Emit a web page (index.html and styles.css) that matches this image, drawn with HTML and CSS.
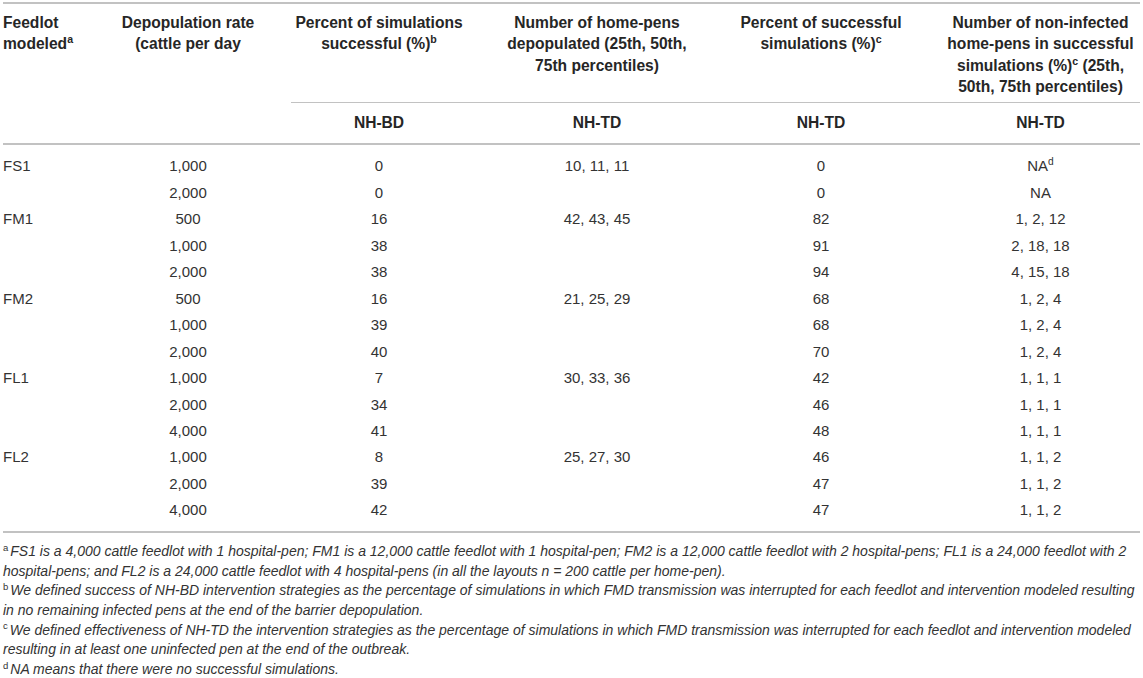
FILE: index.html
```html
<!DOCTYPE html>
<html lang="en">
<head>
<meta charset="utf-8">
<title>Table</title>
<link rel="stylesheet" href="styles.css">
</head>
<body>
<div class="page">
<table class="tbl">
<colgroup>
<col class="c1"><col class="c2"><col class="c3"><col class="c4"><col class="c5"><col class="c6">
</colgroup>
<thead>
<tr class="h1">
<th rowspan="2" class="left">Feedlot<br>modeled<sup>a</sup></th>
<th rowspan="2">Depopulation rate<br>(cattle per day</th>
<th>Percent of simulations<br>successful (%)<sup>b</sup></th>
<th>Number of home-pens<br>depopulated (25th, 50th,<br>75th percentiles)</th>
<th>Percent of successful<br>simulations (%)<sup>c</sup></th>
<th class="last">Number of non-infected<br>home-pens in successful<br>simulations (%)<sup>c</sup> (25th,<br>50th, 75th percentiles)</th>
</tr>
<tr class="h2">
<th>NH-BD</th>
<th>NH-TD</th>
<th>NH-TD</th>
<th class="last">NH-TD</th>
</tr>
</thead>
<tbody>
<tr><td class="left">FS1</td><td>1,000</td><td>0</td><td>10, 11, 11</td><td>0</td><td class="last">NA<sup>d</sup></td></tr>
<tr><td class="left"></td><td>2,000</td><td>0</td><td></td><td>0</td><td class="last">NA</td></tr>
<tr><td class="left">FM1</td><td>500</td><td>16</td><td>42, 43, 45</td><td>82</td><td class="last">1, 2, 12</td></tr>
<tr><td class="left"></td><td>1,000</td><td>38</td><td></td><td>91</td><td class="last">2, 18, 18</td></tr>
<tr><td class="left"></td><td>2,000</td><td>38</td><td></td><td>94</td><td class="last">4, 15, 18</td></tr>
<tr><td class="left">FM2</td><td>500</td><td>16</td><td>21, 25, 29</td><td>68</td><td class="last">1, 2, 4</td></tr>
<tr><td class="left"></td><td>1,000</td><td>39</td><td></td><td>68</td><td class="last">1, 2, 4</td></tr>
<tr><td class="left"></td><td>2,000</td><td>40</td><td></td><td>70</td><td class="last">1, 2, 4</td></tr>
<tr><td class="left">FL1</td><td>1,000</td><td>7</td><td>30, 33, 36</td><td>42</td><td class="last">1, 1, 1</td></tr>
<tr><td class="left"></td><td>2,000</td><td>34</td><td></td><td>46</td><td class="last">1, 1, 1</td></tr>
<tr><td class="left"></td><td>4,000</td><td>41</td><td></td><td>48</td><td class="last">1, 1, 1</td></tr>
<tr><td class="left">FL2</td><td>1,000</td><td>8</td><td>25, 27, 30</td><td>46</td><td class="last">1, 1, 2</td></tr>
<tr><td class="left"></td><td>2,000</td><td>39</td><td></td><td>47</td><td class="last">1, 1, 2</td></tr>
<tr><td class="left"></td><td>4,000</td><td>42</td><td></td><td>47</td><td class="last">1, 1, 2</td></tr>
</tbody>
</table>
<div class="notes">
<p><sup>a</sup>FS1 is a 4,000 cattle feedlot with 1 hospital-pen; FM1 is a 12,000 cattle feedlot with 1 hospital-pen; FM2 is a 12,000 cattle feedlot with 2 hospital-pens; FL1 is a 24,000 feedlot with 2<br>hospital-pens; and FL2 is a 24,000 cattle feedlot with 4 hospital-pens (in all the layouts n = 200 cattle per home-pen).</p>
<p><sup>b</sup>We defined success of NH-BD intervention strategies as the percentage of simulations in which FMD transmission was interrupted for each feedlot and intervention modeled resulting<br>in no remaining infected pens at the end of the barrier depopulation.</p>
<p><sup>c</sup>We defined effectiveness of NH-TD the intervention strategies as the percentage of simulations in which FMD transmission was interrupted for each feedlot and intervention modeled<br>resulting in at least one uninfected pen at the end of the outbreak.</p>
<p><sup>d</sup>NA means that there were no successful simulations.</p>
</div>
</div>
</body>
</html>
```

FILE: styles.css
```css
html, body {
  margin: 0;
  padding: 0;
  background: #ffffff;
}

.page {
  padding: 2px 3px 0 3px;
  font-family: "Liberation Sans", Arial, Helvetica, sans-serif;
  color: #333333;
}

.tbl {
  width: 1137px;
  table-layout: fixed;
  border-collapse: separate;
  border-spacing: 0;
  font-size: 15px;
}

.c1 { width: 82px; }
.c2 { width: 206px; }
.c3 { width: 176px; }
.c4 { width: 260px; }
.c5 { width: 188px; }
.c6 { width: 225px; }

.tbl th,
.tbl td {
  padding: 0;
  text-align: center;
  white-space: nowrap;
}

.tbl .left {
  text-align: left;
}

.tbl .last {
  padding-left: 26px;
}

.tbl th {
  font-size: 15.6px;
  font-weight: bold;
  color: #262626;
  line-height: 21.3px;
  vertical-align: top;
}

.h1 th {
  border-top: 2px solid #c2c2c2;
  padding-top: 8px;
  padding-bottom: 5px;
}

.h1 th[rowspan] {
  border-bottom: 2px solid #c2c2c2;
}

.h2 th {
  border-top: 1px solid #c2c2c2;
  border-bottom: 2px solid #c2c2c2;
  padding-top: 9px;
  padding-bottom: 10px;
}

.tbl td {
  line-height: 26.46px;
}

.tbl tbody tr:first-child td {
  padding-top: 8px;
}

.tbl tbody tr:last-child td {
  padding-bottom: 7px;
  border-bottom: 2px solid #c2c2c2;
}

sup {
  font-size: 0.68em;
  line-height: 0;
  vertical-align: 0.55em;
}

.notes {
  margin-top: 9px;
  font-size: 14px;
  font-style: italic;
  line-height: 19.7px;
  color: #333333;
  white-space: nowrap;
}

.notes p {
  margin: 0;
}

.notes sup {
  font-style: normal;
  margin-right: 2px;
}
```
